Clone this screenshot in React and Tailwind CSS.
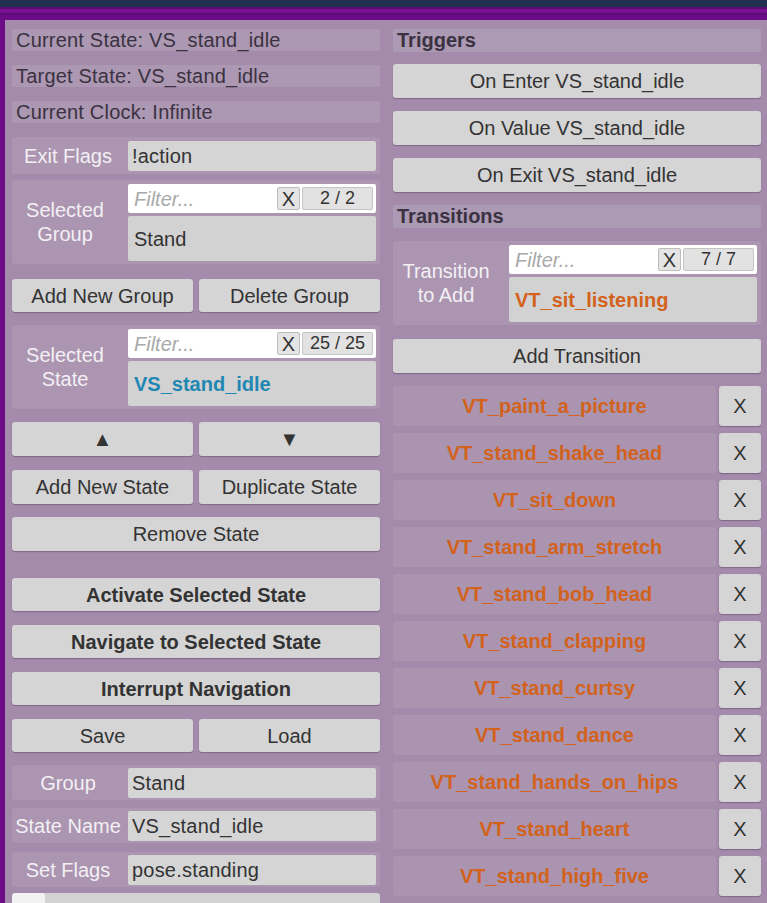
import React from "react";

function Btn({ children, className = "" }) {
  return (
    <div
      className={
        "flex shrink-0 items-center justify-center rounded-[3px] bg-[#d5d5d5] text-[20px] text-[#333333] shadow-[0_1px_1px_rgba(60,40,70,0.35)] " +
        className
      }
    >
      {children}
    </div>
  );
}

function Info({ children }) {
  return (
    <div className="h-[22px] shrink-0 rounded-[2px] bg-[#ac98b3] pl-[4px] text-[20px] leading-[22px] tracking-[0.2px] text-[#3b3241]">
      {children}
    </div>
  );
}

function Header({ children }) {
  return (
    <div className="h-[23px] shrink-0 rounded-[2px] bg-[#ac99b4] pl-[4px] text-[20px] font-bold leading-[23px] text-[#3b3241]">
      {children}
    </div>
  );
}

function Field({ label, value, className = "" }) {
  return (
    <div className={"flex h-[35px] shrink-0 items-center rounded-[3px] bg-[#ab95b1] " + className}>
      <div className="mr-[4px] w-[112px] whitespace-nowrap text-center text-[20px] text-[#f3f0f4]">{label}</div>
      <div className="mr-[4px] flex h-[30px] flex-1 items-center rounded-[2px] bg-[#d5d5d5] pl-[4px] text-[20px] tracking-[0.2px] text-[#333333]">
        {value}
      </div>
    </div>
  );
}

function Filter({ count }) {
  return (
    <div className="flex h-[29px] items-center rounded-[2px] bg-white">
      <div className="flex-1 pl-[6px] text-[20px] italic text-[#a9a9a9]">Filter...</div>
      <div className="flex h-[23px] w-[23px] items-center justify-center rounded-[2px] border border-[#bdbdbd] bg-[#e4e4e4] text-[20px] text-[#333333]">
        X
      </div>
      <div className="ml-[2px] mr-[3px] flex h-[23px] w-[71px] items-center justify-center rounded-[2px] border border-[#c4c4c4] bg-[#e2e2e2] text-[18px] text-[#333333]">
        {count}
      </div>
    </div>
  );
}

function Selector({ label1, label2, count, value, valueClass, className = "" }) {
  return (
    <div className={"flex h-[84px] shrink-0 rounded-[3px] bg-[#ab95b1] " + className}>
      <div className="mr-[10px] flex w-[106px] flex-col items-center justify-center text-[20px] leading-[24px] text-[#f3f0f4]">
        <div>{label1}</div>
        <div>{label2}</div>
      </div>
      <div className="mr-[4px] mt-[4px] flex flex-1 flex-col gap-[3px]">
        <Filter count={count} />
        <div className={"flex h-[45px] items-center rounded-[2px] bg-[#d2d2d2] pl-[6px] text-[20px] " + valueClass}>
          {value}
        </div>
      </div>
    </div>
  );
}

const transitions = [
  "VT_paint_a_picture",
  "VT_stand_shake_head",
  "VT_sit_down",
  "VT_stand_arm_stretch",
  "VT_stand_bob_head",
  "VT_stand_clapping",
  "VT_stand_curtsy",
  "VT_stand_dance",
  "VT_stand_hands_on_hips",
  "VT_stand_heart",
  "VT_stand_high_five",
];

export default function App() {
  return (
    <div className="h-[903px] w-[767px] overflow-hidden bg-[#6c0b87] font-['Liberation_Sans',Arial,sans-serif]">
      <div className="h-[7px] bg-[#22304f]" />
      <div className="h-[2px] bg-[#5a0a72]" />
      <div className="h-[4px] bg-[#7a1092]" />
      <div className="h-[2px] bg-[#5e0a77]" />
      <div className="ml-[5px] mt-[5px] flex h-[900px] items-start gap-[13px] bg-[#a48aab] pl-[7px] pt-[9px]">
        {/* Left column */}
        <div className="flex w-[368px] flex-col">
          <Info>Current State: VS_stand_idle</Info>
          <div className="mt-[14px]">
            <Info>Target State: VS_stand_idle</Info>
          </div>
          <div className="mt-[14px]">
            <Info>Current Clock: Infinite</Info>
          </div>
          <Field className="mt-[14px] h-[37px]" label="Exit Flags" value="!action" />
          <Selector
            className="mt-[6px] h-[83px]"
            label1="Selected"
            label2="Group"
            count="2 / 2"
            value="Stand"
            valueClass="text-[#333333]"
          />
          <div className="mt-[15px] flex shrink-0 gap-[6px]">
            <Btn className="h-[33px] flex-1">Add New Group</Btn>
            <Btn className="h-[33px] flex-1">Delete Group</Btn>
          </div>
          <Selector
            className="mt-[13px]"
            label1="Selected"
            label2="State"
            count="25 / 25"
            value="VS_stand_idle"
            valueClass="font-bold text-[#1f87b3]"
          />
          <div className="mt-[13px] flex shrink-0 gap-[6px]">
            <Btn className="h-[34px] flex-1 text-[18px]">▲</Btn>
            <Btn className="h-[34px] flex-1 text-[18px]">▼</Btn>
          </div>
          <div className="mt-[14px] flex shrink-0 gap-[6px]">
            <Btn className="h-[34px] flex-1">Add New State</Btn>
            <Btn className="h-[34px] flex-1">Duplicate State</Btn>
          </div>
          <Btn className="mt-[13px] h-[34px]">Remove State</Btn>
          <Btn className="mt-[27px] h-[33px] font-bold">Activate Selected State</Btn>
          <Btn className="mt-[14px] h-[33px] font-bold">Navigate to Selected State</Btn>
          <Btn className="mt-[14px] h-[33px] font-bold">Interrupt Navigation</Btn>
          <div className="mt-[14px] flex shrink-0 gap-[6px]">
            <Btn className="h-[33px] flex-1">Save</Btn>
            <Btn className="h-[33px] flex-1">Load</Btn>
          </div>
          <Field className="mt-[13px]" label="Group" value="Stand" />
          <Field className="mt-[8px]" label="State Name" value="VS_stand_idle" />
          <Field className="mt-[9px]" label="Set Flags" value="pose.standing" />
          <div className="mt-[6px] flex h-[20px] shrink-0 overflow-hidden rounded-[3px] bg-[#d2d2d2]">
            <div className="w-[33px] rounded-[3px] bg-[#f2f2f2]" />
          </div>
        </div>

        {/* Right column */}
        <div className="flex w-[368px] flex-col">
          <Header>Triggers</Header>
          <Btn className="mt-[12px] h-[34px]">On Enter VS_stand_idle</Btn>
          <Btn className="mt-[13px] h-[34px]">On Value VS_stand_idle</Btn>
          <Btn className="mt-[13px] h-[34px]">On Exit VS_stand_idle</Btn>
          <div className="mt-[13px] shrink-0">
            <Header>Transitions</Header>
          </div>
          <Selector
            className="mt-[13px]"
            label1="Transition"
            label2="to Add"
            count="7 / 7"
            value="VT_sit_listening"
            valueClass="font-bold text-[#d2621c]"
          />
          <Btn className="mt-[14px] h-[34px]">Add Transition</Btn>
          <div className="mt-[13px] flex shrink-0 flex-col gap-[7px]">
            {transitions.map((t) => (
              <div key={t} className="flex h-[40px] shrink-0 gap-[3px]">
                <div className="flex flex-1 items-center justify-center rounded-[3px] bg-[#aa94b0] text-[20px] font-bold text-[#d2621c]">
                  {t}
                </div>
                <Btn className="w-[42px]">X</Btn>
              </div>
            ))}
            <div className="flex h-[40px] shrink-0 gap-[3px]">
              <div className="flex-1 rounded-[3px] bg-[#aa94b0]" />
              <div className="w-[42px] rounded-[3px] bg-[#d5d5d5]" />
            </div>
          </div>
        </div>
      </div>
    </div>
  );
}
